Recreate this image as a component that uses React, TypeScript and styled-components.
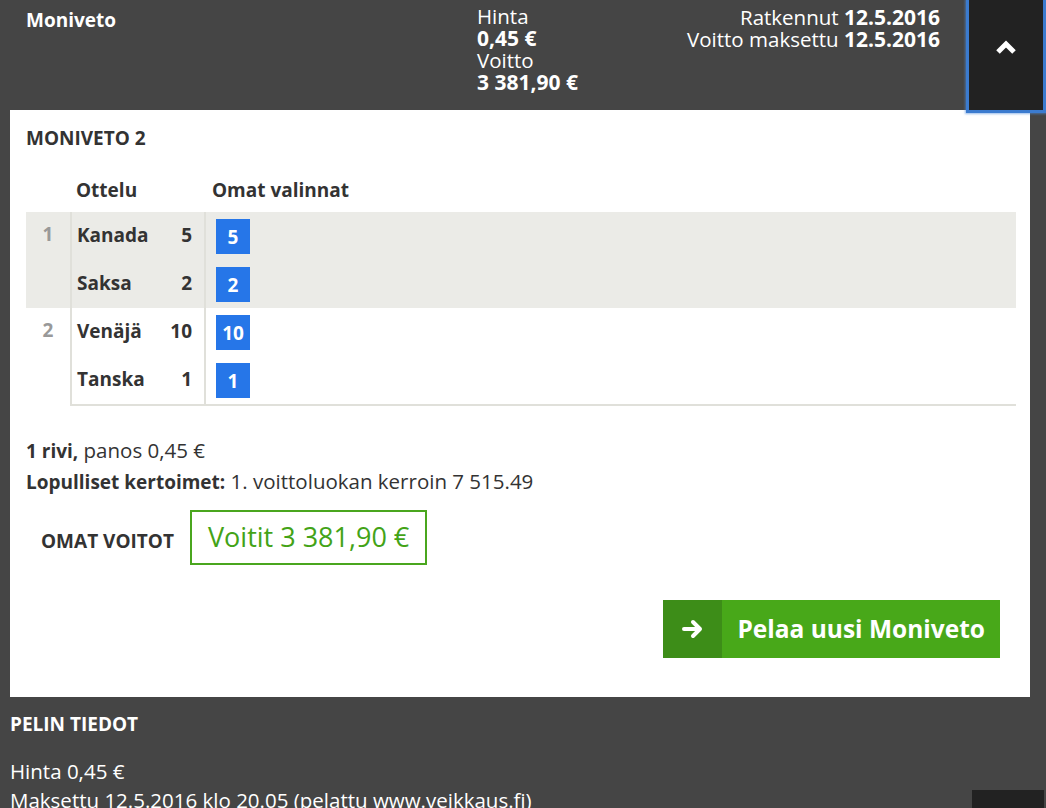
import React from "react";
import styled, { createGlobalStyle } from "styled-components";

const FONT = `"Open Sans", "Noto Sans", Arial, sans-serif`;

const Global = createGlobalStyle`
  html, body { margin: 0; padding: 0; }
  body {
    background: #454545;
    font-family: ${FONT};
    font-size: 20.5px;
    color: #fff;
    overflow: hidden;
  }
  * { box-sizing: border-box; }
`;

const Page = styled.div`
  width: 1046px;
  height: 808px;
  overflow: hidden;
  position: relative;
`;

const Header = styled.header`
  display: flex;
  align-items: flex-start;
  height: 110px;
  padding-left: 26px;
  color: #fff;
`;

const Title = styled.div`
  width: 451px;
  font-weight: 700;
  font-size: 19px;
  line-height: 22px;
  padding-top: 9px;
`;

const PriceCol = styled.div`
  flex: 1;
  padding-top: 5px;
  line-height: 22px;
`;

const Strong = styled.b<{ $big?: boolean }>`
  font-weight: 700;
  font-size: ${(p) => (p.$big ? "21px" : "19px")};
`;

const DatesCol = styled.div`
  text-align: right;
  padding-top: 6px;
  line-height: 22px;
  margin-right: 26px;
`;

const Toggle = styled.button`
  position: relative;
  z-index: 2;
  width: 80px;
  height: 113px;
  margin-bottom: -3px;
  background: #222;
  border: 3px solid #3b7bcf;
  border-top: none;
  box-shadow: 0 0 2px 1px rgba(80, 140, 220, 0.6);
  display: flex;
  align-items: flex-start;
  justify-content: center;
  padding-top: 39px;
  cursor: pointer;
`;

const Panel = styled.section`
  margin: 0 16px 0 10px;
  background: #fff;
  color: #333;
  padding: 16px 14px 39px 16px;
`;

const PanelTitle = styled.h2`
  margin: 0;
  font-size: 19px;
  font-weight: 700;
  line-height: 24px;
  text-transform: uppercase;
`;

const Table = styled.div`
  margin-top: 25px;
  display: grid;
  grid-template-columns: 44px 136px 1fr;
`;

const HeadCell = styled.div<{ $pad?: number }>`
  font-weight: 700;
  font-size: 19px;
  height: 37px;
  line-height: 30px;
  padding-left: ${(p) => p.$pad ?? 0}px;
`;

const Group = styled.div<{ $shaded: boolean }>`
  grid-column: 1 / -1;
  display: grid;
  grid-template-columns: 44px 136px 1fr;
  background: ${(p) => (p.$shaded ? "#ebebe7" : "#fff")};
`;

const NumCell = styled.div`
  grid-row: span 2;
  color: #999;
  font-weight: 700;
  font-size: 19px;
  text-align: center;
  padding-top: 10px;
  line-height: 24px;
`;

const TeamCell = styled.div`
  display: flex;
  justify-content: space-between;
  align-items: center;
  height: 48px;
  padding: 0 12px 3px 5px;
  border-left: 2px solid #e0e0da;
  border-right: 2px solid #e0e0da;
  font-weight: 700;
  font-size: 19px;
`;

const PickCell = styled.div`
  display: flex;
  align-items: center;
  height: 48px;
  padding-left: 10px;
`;

const Pick = styled.span`
  width: 34px;
  height: 35px;
  background: #2676e8;
  color: #fff;
  font-weight: 700;
  font-size: 19px;
  display: flex;
  align-items: center;
  justify-content: center;
  padding-top: 2px;
`;

const TableFoot = styled.div`
  grid-column: 2 / -1;
  height: 2px;
  background: #e0e0da;
`;

const Info = styled.div`
  margin-top: 29px;
  line-height: 30px;
`;

const WinRow = styled.div`
  display: flex;
  align-items: center;
  margin-top: 13px;
  padding-left: 15px;
  gap: 16px;
`;

const WinLabel = styled.div`
  font-weight: 700;
  font-size: 19px;
  text-transform: uppercase;
  padding-top: 6px;
`;

const WinBox = styled.div`
  border: 2px solid #4aa61e;
  color: #43a317;
  font-size: 27px;
  height: 55px;
  display: flex;
  align-items: center;
  padding: 0 16px 3px;
`;

const Actions = styled.div`
  display: flex;
  justify-content: flex-end;
  margin-top: 35px;
  padding-right: 16px;
`;

const PlayButton = styled.button`
  display: flex;
  align-items: stretch;
  height: 58px;
  border: none;
  padding: 0;
  background: #48a819;
  color: #fff;
  font-family: ${FONT};
  font-size: 24.5px;
  font-weight: 700;
  cursor: pointer;
`;

const PlayIcon = styled.span`
  width: 59px;
  background: #3d8d18;
  display: flex;
  align-items: center;
  justify-content: center;
`;

const PlayText = styled.span`
  display: flex;
  align-items: center;
  padding: 0 15px 2px 15px;
`;

const Details = styled.section`
  padding: 14px 10px 0;
  color: #fff;
`;

const DetailsTitle = styled.h3`
  margin: 0;
  font-size: 19px;
  font-weight: 700;
  line-height: 26px;
`;

const DetailsBody = styled.div`
  margin-top: 20px;
  line-height: 29px;
`;

const NextToggle = styled.div`
  position: absolute;
  left: 972px;
  top: 790px;
  width: 72px;
  height: 30px;
  background: #222;
`;

const groups = [
  { n: 1, rows: [["Kanada", "5"], ["Saksa", "2"]] },
  { n: 2, rows: [["Venäjä", "10"], ["Tanska", "1"]] },
];

export default function App() {
  return (
    <Page>
      <Global />
      <Header>
        <Title>Moniveto</Title>
        <PriceCol>
          Hinta
          <br />
          <Strong $big>0,45 €</Strong>
          <br />
          Voitto
          <br />
          <Strong $big>3 381,90 €</Strong>
        </PriceCol>
        <DatesCol>
          Ratkennut <Strong $big>12.5.2016</Strong>
          <br />
          Voitto maksettu <Strong $big>12.5.2016</Strong>
        </DatesCol>
        <Toggle aria-label="Sulje">
          <svg width="22" height="16" viewBox="0 0 22 16">
            <polyline
              points="3,13 11,5 19,13"
              fill="none"
              stroke="#fff"
              strokeWidth="5"
              strokeLinejoin="miter"
            />
          </svg>
        </Toggle>
      </Header>

      <Panel>
        <PanelTitle>Moniveto 2</PanelTitle>
        <Table>
          <HeadCell />
          <HeadCell $pad={6}>Ottelu</HeadCell>
          <HeadCell $pad={6}>Omat valinnat</HeadCell>
          {groups.map((g, gi) => (
            <Group key={g.n} $shaded={gi % 2 === 0}>
              <NumCell>{g.n}</NumCell>
              {g.rows.map(([team, score], ri) => (
                <React.Fragment key={team}>
                  <TeamCell style={{ gridRow: ri + 1, gridColumn: 2 }}>
                    <span>{team}</span>
                    <span>{score}</span>
                  </TeamCell>
                  <PickCell style={{ gridRow: ri + 1, gridColumn: 3 }}>
                    <Pick>{score}</Pick>
                  </PickCell>
                </React.Fragment>
              ))}
            </Group>
          ))}
          <TableFoot />
        </Table>

        <Info>
          <div>
            <Strong>1 rivi,</Strong> panos 0,45 €
          </div>
          <div>
            <Strong>Lopulliset kertoimet:</Strong> 1. voittoluokan kerroin 7 515.49
          </div>
        </Info>

        <WinRow>
          <WinLabel>Omat voitot</WinLabel>
          <WinBox>Voitit 3 381,90 €</WinBox>
        </WinRow>

        <Actions>
          <PlayButton>
            <PlayIcon>
              <svg width="22" height="20" viewBox="0 0 22 20">
                <path
                  d="M2 10 H18 M11 3 L18 10 L11 17"
                  fill="none"
                  stroke="#fff"
                  strokeWidth="4"
                  strokeLinecap="round"
                  strokeLinejoin="round"
                />
              </svg>
            </PlayIcon>
            <PlayText>Pelaa uusi Moniveto</PlayText>
          </PlayButton>
        </Actions>
      </Panel>

      <Details>
        <DetailsTitle>PELIN TIEDOT</DetailsTitle>
        <DetailsBody>
          <div>Hinta 0,45 €</div>
          <div>Maksettu 12.5.2016 klo 20.05 (pelattu www.veikkaus.fi)</div>
        </DetailsBody>
      </Details>
      <NextToggle />
    </Page>
  );
}
